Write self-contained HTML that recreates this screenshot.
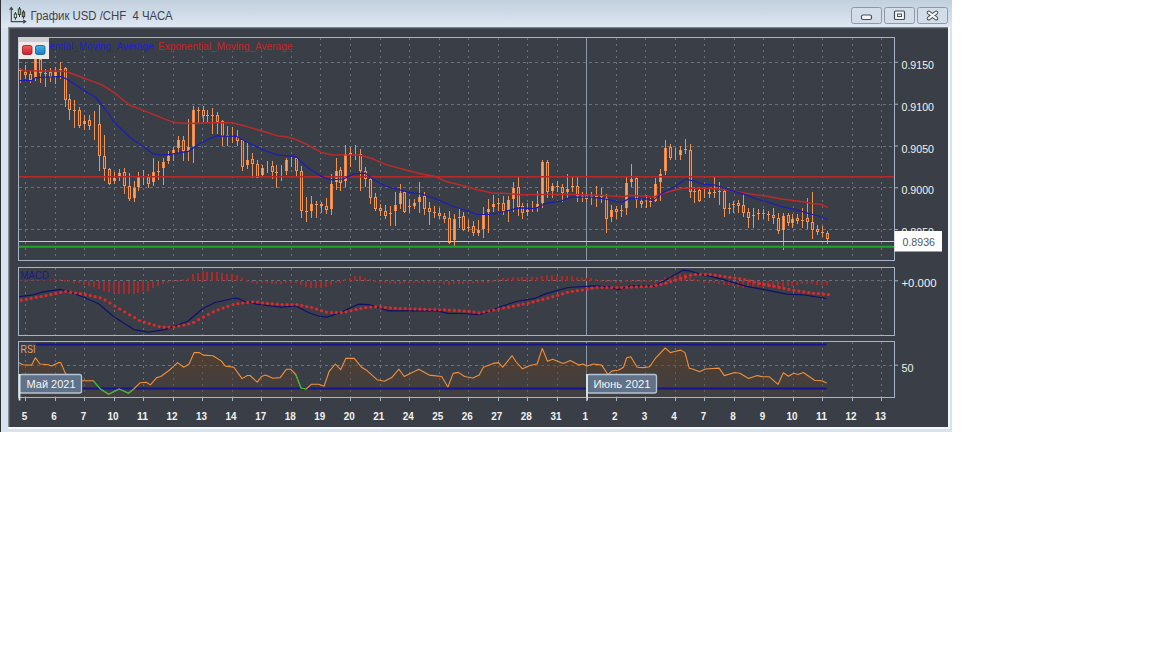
<!DOCTYPE html>
<html><head><meta charset="utf-8"><style>
html,body{margin:0;padding:0;background:#fff;width:1152px;height:648px;overflow:hidden}
svg{position:absolute;left:0;top:0;display:block}
</style></head><body>
<svg width="1152" height="648" viewBox="0 0 1152 648" shape-rendering="auto">
<rect x="0" y="0" width="952" height="432" fill="#d7e3ef"/>
<defs><linearGradient id="tg" x1="0" y1="0" x2="0" y2="1"><stop offset="0" stop-color="#c2cfdd"/><stop offset="1" stop-color="#dfe8f3"/></linearGradient></defs>
<rect x="0" y="0" width="952" height="28" fill="url(#tg)"/>
<rect x="0" y="0" width="1" height="432" fill="#303236"/>
<rect x="8" y="27" width="942" height="402" fill="#f6f9fc"/>
<rect x="8" y="27.5" width="940" height="399.5" fill="#3a3f47"/>
<rect x="8" y="27" width="940" height="1" fill="#7c8186"/><rect x="8" y="28" width="940" height="1" fill="#4e535a"/>
<rect x="8" y="27" width="1" height="400" fill="#868a8e"/><rect x="9" y="28" width="1" height="399" fill="#555a60"/>
<g stroke="#3e4a56" stroke-width="1.2" fill="none"><path d="M11.3 8 V21.6 H25.3"/><path d="M9.6 9.8 L11.3 7.6 L13 9.8"/><path d="M23.3 19.9 L25.6 21.6 L23.3 23.3"/></g>
<g stroke="#24382a" stroke-width="1"><path d="M15.4 12 V19.8 M19.5 7 V17 M23.5 10.2 V18.7"/></g>
<rect x="14.2" y="14" width="2.4" height="3.6" fill="#d6e6d4" stroke="#2a4530" stroke-width="0.9"/>
<rect x="18.3" y="9" width="2.4" height="5.5" fill="#86bc84" stroke="#2a4530" stroke-width="0.9"/>
<rect x="22.3" y="12" width="2.4" height="4.7" fill="#a87c7c" stroke="#3a3030" stroke-width="0.9"/>
<text x="30.5" y="20" font-family="Liberation Sans" font-size="12.5" fill="#3e434a" textLength="142" lengthAdjust="spacingAndGlyphs" xml:space="preserve">График USD /CHF  4 ЧАСА</text>
<rect x="851.5" y="7.5" width="30" height="16" rx="2" fill="#d3dde9" stroke="#8e9aa8" stroke-width="1"/>
<rect x="884.5" y="7.5" width="30" height="16" rx="2" fill="#d3dde9" stroke="#8e9aa8" stroke-width="1"/>
<rect x="917.5" y="7.5" width="30" height="16" rx="2" fill="#d3dde9" stroke="#8e9aa8" stroke-width="1"/>
<rect x="861.5" y="15" width="10" height="4.5" rx="1.5" fill="#f4f6f8" stroke="#4a4f56" stroke-width="1.2"/>
<rect x="894.5" y="11" width="10" height="8.5" rx="1" fill="#f4f6f8" stroke="#4a4f56" stroke-width="1.2"/><rect x="897.5" y="14" width="4" height="2.5" fill="none" stroke="#4a4f56" stroke-width="1"/>
<path d="M928.8 12.6 L936.2 18.4 M936.2 12.6 L928.8 18.4" stroke="#4a4f56" stroke-width="4.2" stroke-linecap="round"/><path d="M928.8 12.6 L936.2 18.4 M936.2 12.6 L928.8 18.4" stroke="#f4f6f8" stroke-width="2.2" stroke-linecap="round"/>
<line x1="25.5" y1="37.5" x2="25.5" y2="260.5" stroke="#68717c" stroke-width="1" stroke-dasharray="2 4" shape-rendering="crispEdges"/>
<line x1="55.5" y1="37.5" x2="55.5" y2="260.5" stroke="#68717c" stroke-width="1" stroke-dasharray="2 4" shape-rendering="crispEdges"/>
<line x1="84.5" y1="37.5" x2="84.5" y2="260.5" stroke="#68717c" stroke-width="1" stroke-dasharray="2 4" shape-rendering="crispEdges"/>
<line x1="114.5" y1="37.5" x2="114.5" y2="260.5" stroke="#68717c" stroke-width="1" stroke-dasharray="2 4" shape-rendering="crispEdges"/>
<line x1="143.5" y1="37.5" x2="143.5" y2="260.5" stroke="#68717c" stroke-width="1" stroke-dasharray="2 4" shape-rendering="crispEdges"/>
<line x1="173.5" y1="37.5" x2="173.5" y2="260.5" stroke="#68717c" stroke-width="1" stroke-dasharray="2 4" shape-rendering="crispEdges"/>
<line x1="202.5" y1="37.5" x2="202.5" y2="260.5" stroke="#68717c" stroke-width="1" stroke-dasharray="2 4" shape-rendering="crispEdges"/>
<line x1="232.5" y1="37.5" x2="232.5" y2="260.5" stroke="#68717c" stroke-width="1" stroke-dasharray="2 4" shape-rendering="crispEdges"/>
<line x1="261.5" y1="37.5" x2="261.5" y2="260.5" stroke="#68717c" stroke-width="1" stroke-dasharray="2 4" shape-rendering="crispEdges"/>
<line x1="291.5" y1="37.5" x2="291.5" y2="260.5" stroke="#68717c" stroke-width="1" stroke-dasharray="2 4" shape-rendering="crispEdges"/>
<line x1="320.5" y1="37.5" x2="320.5" y2="260.5" stroke="#68717c" stroke-width="1" stroke-dasharray="2 4" shape-rendering="crispEdges"/>
<line x1="350.5" y1="37.5" x2="350.5" y2="260.5" stroke="#68717c" stroke-width="1" stroke-dasharray="2 4" shape-rendering="crispEdges"/>
<line x1="380.5" y1="37.5" x2="380.5" y2="260.5" stroke="#68717c" stroke-width="1" stroke-dasharray="2 4" shape-rendering="crispEdges"/>
<line x1="409.5" y1="37.5" x2="409.5" y2="260.5" stroke="#68717c" stroke-width="1" stroke-dasharray="2 4" shape-rendering="crispEdges"/>
<line x1="439.5" y1="37.5" x2="439.5" y2="260.5" stroke="#68717c" stroke-width="1" stroke-dasharray="2 4" shape-rendering="crispEdges"/>
<line x1="468.5" y1="37.5" x2="468.5" y2="260.5" stroke="#68717c" stroke-width="1" stroke-dasharray="2 4" shape-rendering="crispEdges"/>
<line x1="498.5" y1="37.5" x2="498.5" y2="260.5" stroke="#68717c" stroke-width="1" stroke-dasharray="2 4" shape-rendering="crispEdges"/>
<line x1="527.5" y1="37.5" x2="527.5" y2="260.5" stroke="#68717c" stroke-width="1" stroke-dasharray="2 4" shape-rendering="crispEdges"/>
<line x1="557.5" y1="37.5" x2="557.5" y2="260.5" stroke="#68717c" stroke-width="1" stroke-dasharray="2 4" shape-rendering="crispEdges"/>
<line x1="586.5" y1="37.5" x2="586.5" y2="260.5" stroke="#68717c" stroke-width="1" stroke-dasharray="2 4" shape-rendering="crispEdges"/>
<line x1="616.5" y1="37.5" x2="616.5" y2="260.5" stroke="#68717c" stroke-width="1" stroke-dasharray="2 4" shape-rendering="crispEdges"/>
<line x1="645.5" y1="37.5" x2="645.5" y2="260.5" stroke="#68717c" stroke-width="1" stroke-dasharray="2 4" shape-rendering="crispEdges"/>
<line x1="675.5" y1="37.5" x2="675.5" y2="260.5" stroke="#68717c" stroke-width="1" stroke-dasharray="2 4" shape-rendering="crispEdges"/>
<line x1="704.5" y1="37.5" x2="704.5" y2="260.5" stroke="#68717c" stroke-width="1" stroke-dasharray="2 4" shape-rendering="crispEdges"/>
<line x1="734.5" y1="37.5" x2="734.5" y2="260.5" stroke="#68717c" stroke-width="1" stroke-dasharray="2 4" shape-rendering="crispEdges"/>
<line x1="763.5" y1="37.5" x2="763.5" y2="260.5" stroke="#68717c" stroke-width="1" stroke-dasharray="2 4" shape-rendering="crispEdges"/>
<line x1="793.5" y1="37.5" x2="793.5" y2="260.5" stroke="#68717c" stroke-width="1" stroke-dasharray="2 4" shape-rendering="crispEdges"/>
<line x1="822.5" y1="37.5" x2="822.5" y2="260.5" stroke="#68717c" stroke-width="1" stroke-dasharray="2 4" shape-rendering="crispEdges"/>
<line x1="852.5" y1="37.5" x2="852.5" y2="260.5" stroke="#68717c" stroke-width="1" stroke-dasharray="2 4" shape-rendering="crispEdges"/>
<line x1="881.5" y1="37.5" x2="881.5" y2="260.5" stroke="#68717c" stroke-width="1" stroke-dasharray="2 4" shape-rendering="crispEdges"/>
<line x1="18.5" y1="62.5" x2="894.5" y2="62.5" stroke="#68717c" stroke-width="1" stroke-dasharray="3 3" shape-rendering="crispEdges"/>
<line x1="894.5" y1="62.3" x2="898.0" y2="62.3" stroke="#a6b4c6" stroke-width="1"/>
<line x1="18.5" y1="104.5" x2="894.5" y2="104.5" stroke="#68717c" stroke-width="1" stroke-dasharray="3 3" shape-rendering="crispEdges"/>
<line x1="894.5" y1="104.2" x2="898.0" y2="104.2" stroke="#a6b4c6" stroke-width="1"/>
<line x1="18.5" y1="146.5" x2="894.5" y2="146.5" stroke="#68717c" stroke-width="1" stroke-dasharray="3 3" shape-rendering="crispEdges"/>
<line x1="894.5" y1="146.0" x2="898.0" y2="146.0" stroke="#a6b4c6" stroke-width="1"/>
<line x1="18.5" y1="187.5" x2="894.5" y2="187.5" stroke="#68717c" stroke-width="1" stroke-dasharray="3 3" shape-rendering="crispEdges"/>
<line x1="894.5" y1="187.8" x2="898.0" y2="187.8" stroke="#a6b4c6" stroke-width="1"/>
<line x1="18.5" y1="229.5" x2="894.5" y2="229.5" stroke="#68717c" stroke-width="1" stroke-dasharray="3 3" shape-rendering="crispEdges"/>
<line x1="894.5" y1="229.6" x2="898.0" y2="229.6" stroke="#a6b4c6" stroke-width="1"/>
<rect x="18.5" y="37.5" width="876.0" height="223.0" fill="none" stroke="#a6b4c6" stroke-width="1"/>
<line x1="25.5" y1="267.5" x2="25.5" y2="335.5" stroke="#68717c" stroke-width="1" stroke-dasharray="2 4" shape-rendering="crispEdges"/>
<line x1="55.5" y1="267.5" x2="55.5" y2="335.5" stroke="#68717c" stroke-width="1" stroke-dasharray="2 4" shape-rendering="crispEdges"/>
<line x1="84.5" y1="267.5" x2="84.5" y2="335.5" stroke="#68717c" stroke-width="1" stroke-dasharray="2 4" shape-rendering="crispEdges"/>
<line x1="114.5" y1="267.5" x2="114.5" y2="335.5" stroke="#68717c" stroke-width="1" stroke-dasharray="2 4" shape-rendering="crispEdges"/>
<line x1="143.5" y1="267.5" x2="143.5" y2="335.5" stroke="#68717c" stroke-width="1" stroke-dasharray="2 4" shape-rendering="crispEdges"/>
<line x1="173.5" y1="267.5" x2="173.5" y2="335.5" stroke="#68717c" stroke-width="1" stroke-dasharray="2 4" shape-rendering="crispEdges"/>
<line x1="202.5" y1="267.5" x2="202.5" y2="335.5" stroke="#68717c" stroke-width="1" stroke-dasharray="2 4" shape-rendering="crispEdges"/>
<line x1="232.5" y1="267.5" x2="232.5" y2="335.5" stroke="#68717c" stroke-width="1" stroke-dasharray="2 4" shape-rendering="crispEdges"/>
<line x1="261.5" y1="267.5" x2="261.5" y2="335.5" stroke="#68717c" stroke-width="1" stroke-dasharray="2 4" shape-rendering="crispEdges"/>
<line x1="291.5" y1="267.5" x2="291.5" y2="335.5" stroke="#68717c" stroke-width="1" stroke-dasharray="2 4" shape-rendering="crispEdges"/>
<line x1="320.5" y1="267.5" x2="320.5" y2="335.5" stroke="#68717c" stroke-width="1" stroke-dasharray="2 4" shape-rendering="crispEdges"/>
<line x1="350.5" y1="267.5" x2="350.5" y2="335.5" stroke="#68717c" stroke-width="1" stroke-dasharray="2 4" shape-rendering="crispEdges"/>
<line x1="380.5" y1="267.5" x2="380.5" y2="335.5" stroke="#68717c" stroke-width="1" stroke-dasharray="2 4" shape-rendering="crispEdges"/>
<line x1="409.5" y1="267.5" x2="409.5" y2="335.5" stroke="#68717c" stroke-width="1" stroke-dasharray="2 4" shape-rendering="crispEdges"/>
<line x1="439.5" y1="267.5" x2="439.5" y2="335.5" stroke="#68717c" stroke-width="1" stroke-dasharray="2 4" shape-rendering="crispEdges"/>
<line x1="468.5" y1="267.5" x2="468.5" y2="335.5" stroke="#68717c" stroke-width="1" stroke-dasharray="2 4" shape-rendering="crispEdges"/>
<line x1="498.5" y1="267.5" x2="498.5" y2="335.5" stroke="#68717c" stroke-width="1" stroke-dasharray="2 4" shape-rendering="crispEdges"/>
<line x1="527.5" y1="267.5" x2="527.5" y2="335.5" stroke="#68717c" stroke-width="1" stroke-dasharray="2 4" shape-rendering="crispEdges"/>
<line x1="557.5" y1="267.5" x2="557.5" y2="335.5" stroke="#68717c" stroke-width="1" stroke-dasharray="2 4" shape-rendering="crispEdges"/>
<line x1="586.5" y1="267.5" x2="586.5" y2="335.5" stroke="#68717c" stroke-width="1" stroke-dasharray="2 4" shape-rendering="crispEdges"/>
<line x1="616.5" y1="267.5" x2="616.5" y2="335.5" stroke="#68717c" stroke-width="1" stroke-dasharray="2 4" shape-rendering="crispEdges"/>
<line x1="645.5" y1="267.5" x2="645.5" y2="335.5" stroke="#68717c" stroke-width="1" stroke-dasharray="2 4" shape-rendering="crispEdges"/>
<line x1="675.5" y1="267.5" x2="675.5" y2="335.5" stroke="#68717c" stroke-width="1" stroke-dasharray="2 4" shape-rendering="crispEdges"/>
<line x1="704.5" y1="267.5" x2="704.5" y2="335.5" stroke="#68717c" stroke-width="1" stroke-dasharray="2 4" shape-rendering="crispEdges"/>
<line x1="734.5" y1="267.5" x2="734.5" y2="335.5" stroke="#68717c" stroke-width="1" stroke-dasharray="2 4" shape-rendering="crispEdges"/>
<line x1="763.5" y1="267.5" x2="763.5" y2="335.5" stroke="#68717c" stroke-width="1" stroke-dasharray="2 4" shape-rendering="crispEdges"/>
<line x1="793.5" y1="267.5" x2="793.5" y2="335.5" stroke="#68717c" stroke-width="1" stroke-dasharray="2 4" shape-rendering="crispEdges"/>
<line x1="822.5" y1="267.5" x2="822.5" y2="335.5" stroke="#68717c" stroke-width="1" stroke-dasharray="2 4" shape-rendering="crispEdges"/>
<line x1="852.5" y1="267.5" x2="852.5" y2="335.5" stroke="#68717c" stroke-width="1" stroke-dasharray="2 4" shape-rendering="crispEdges"/>
<line x1="881.5" y1="267.5" x2="881.5" y2="335.5" stroke="#68717c" stroke-width="1" stroke-dasharray="2 4" shape-rendering="crispEdges"/>
<line x1="18.5" y1="280.5" x2="894.5" y2="280.5" stroke="#68717c" stroke-width="1" stroke-dasharray="3 3" shape-rendering="crispEdges"/>
<line x1="894.5" y1="280.8" x2="898.0" y2="280.8" stroke="#a6b4c6" stroke-width="1"/>
<rect x="18.5" y="267.5" width="876.0" height="68.0" fill="none" stroke="#a6b4c6" stroke-width="1"/>
<line x1="25.5" y1="341.5" x2="25.5" y2="397.5" stroke="#68717c" stroke-width="1" stroke-dasharray="2 4" shape-rendering="crispEdges"/>
<line x1="55.5" y1="341.5" x2="55.5" y2="397.5" stroke="#68717c" stroke-width="1" stroke-dasharray="2 4" shape-rendering="crispEdges"/>
<line x1="84.5" y1="341.5" x2="84.5" y2="397.5" stroke="#68717c" stroke-width="1" stroke-dasharray="2 4" shape-rendering="crispEdges"/>
<line x1="114.5" y1="341.5" x2="114.5" y2="397.5" stroke="#68717c" stroke-width="1" stroke-dasharray="2 4" shape-rendering="crispEdges"/>
<line x1="143.5" y1="341.5" x2="143.5" y2="397.5" stroke="#68717c" stroke-width="1" stroke-dasharray="2 4" shape-rendering="crispEdges"/>
<line x1="173.5" y1="341.5" x2="173.5" y2="397.5" stroke="#68717c" stroke-width="1" stroke-dasharray="2 4" shape-rendering="crispEdges"/>
<line x1="202.5" y1="341.5" x2="202.5" y2="397.5" stroke="#68717c" stroke-width="1" stroke-dasharray="2 4" shape-rendering="crispEdges"/>
<line x1="232.5" y1="341.5" x2="232.5" y2="397.5" stroke="#68717c" stroke-width="1" stroke-dasharray="2 4" shape-rendering="crispEdges"/>
<line x1="261.5" y1="341.5" x2="261.5" y2="397.5" stroke="#68717c" stroke-width="1" stroke-dasharray="2 4" shape-rendering="crispEdges"/>
<line x1="291.5" y1="341.5" x2="291.5" y2="397.5" stroke="#68717c" stroke-width="1" stroke-dasharray="2 4" shape-rendering="crispEdges"/>
<line x1="320.5" y1="341.5" x2="320.5" y2="397.5" stroke="#68717c" stroke-width="1" stroke-dasharray="2 4" shape-rendering="crispEdges"/>
<line x1="350.5" y1="341.5" x2="350.5" y2="397.5" stroke="#68717c" stroke-width="1" stroke-dasharray="2 4" shape-rendering="crispEdges"/>
<line x1="380.5" y1="341.5" x2="380.5" y2="397.5" stroke="#68717c" stroke-width="1" stroke-dasharray="2 4" shape-rendering="crispEdges"/>
<line x1="409.5" y1="341.5" x2="409.5" y2="397.5" stroke="#68717c" stroke-width="1" stroke-dasharray="2 4" shape-rendering="crispEdges"/>
<line x1="439.5" y1="341.5" x2="439.5" y2="397.5" stroke="#68717c" stroke-width="1" stroke-dasharray="2 4" shape-rendering="crispEdges"/>
<line x1="468.5" y1="341.5" x2="468.5" y2="397.5" stroke="#68717c" stroke-width="1" stroke-dasharray="2 4" shape-rendering="crispEdges"/>
<line x1="498.5" y1="341.5" x2="498.5" y2="397.5" stroke="#68717c" stroke-width="1" stroke-dasharray="2 4" shape-rendering="crispEdges"/>
<line x1="527.5" y1="341.5" x2="527.5" y2="397.5" stroke="#68717c" stroke-width="1" stroke-dasharray="2 4" shape-rendering="crispEdges"/>
<line x1="557.5" y1="341.5" x2="557.5" y2="397.5" stroke="#68717c" stroke-width="1" stroke-dasharray="2 4" shape-rendering="crispEdges"/>
<line x1="586.5" y1="341.5" x2="586.5" y2="397.5" stroke="#68717c" stroke-width="1" stroke-dasharray="2 4" shape-rendering="crispEdges"/>
<line x1="616.5" y1="341.5" x2="616.5" y2="397.5" stroke="#68717c" stroke-width="1" stroke-dasharray="2 4" shape-rendering="crispEdges"/>
<line x1="645.5" y1="341.5" x2="645.5" y2="397.5" stroke="#68717c" stroke-width="1" stroke-dasharray="2 4" shape-rendering="crispEdges"/>
<line x1="675.5" y1="341.5" x2="675.5" y2="397.5" stroke="#68717c" stroke-width="1" stroke-dasharray="2 4" shape-rendering="crispEdges"/>
<line x1="704.5" y1="341.5" x2="704.5" y2="397.5" stroke="#68717c" stroke-width="1" stroke-dasharray="2 4" shape-rendering="crispEdges"/>
<line x1="734.5" y1="341.5" x2="734.5" y2="397.5" stroke="#68717c" stroke-width="1" stroke-dasharray="2 4" shape-rendering="crispEdges"/>
<line x1="763.5" y1="341.5" x2="763.5" y2="397.5" stroke="#68717c" stroke-width="1" stroke-dasharray="2 4" shape-rendering="crispEdges"/>
<line x1="793.5" y1="341.5" x2="793.5" y2="397.5" stroke="#68717c" stroke-width="1" stroke-dasharray="2 4" shape-rendering="crispEdges"/>
<line x1="822.5" y1="341.5" x2="822.5" y2="397.5" stroke="#68717c" stroke-width="1" stroke-dasharray="2 4" shape-rendering="crispEdges"/>
<line x1="852.5" y1="341.5" x2="852.5" y2="397.5" stroke="#68717c" stroke-width="1" stroke-dasharray="2 4" shape-rendering="crispEdges"/>
<line x1="881.5" y1="341.5" x2="881.5" y2="397.5" stroke="#68717c" stroke-width="1" stroke-dasharray="2 4" shape-rendering="crispEdges"/>
<line x1="18.5" y1="365.5" x2="894.5" y2="365.5" stroke="#68717c" stroke-width="1" stroke-dasharray="3 3" shape-rendering="crispEdges"/>
<line x1="894.5" y1="365.2" x2="898.0" y2="365.2" stroke="#a6b4c6" stroke-width="1"/>
<rect x="18.5" y="341.5" width="876.0" height="56.0" fill="none" stroke="#a6b4c6" stroke-width="1"/>
<defs><clipPath id="cp1"><rect x="19" y="38" width="875" height="222"/></clipPath><clipPath id="cp2"><rect x="19" y="268" width="875" height="67"/></clipPath><clipPath id="cp3"><rect x="19" y="342" width="875" height="55"/></clipPath>
<linearGradient id="rg" gradientUnits="userSpaceOnUse" x1="0" y1="348" x2="0" y2="397"><stop offset="0" stop-color="#6e3c10" stop-opacity="0.5"/><stop offset="1" stop-color="#4e3f36" stop-opacity="0.3"/></linearGradient></defs>
<line x1="586.5" y1="38" x2="586.5" y2="260" stroke="#8d99a6" stroke-width="1"/>
<line x1="586.5" y1="268" x2="586.5" y2="335" stroke="#8d99a6" stroke-width="1"/>
<line x1="586.5" y1="342" x2="586.5" y2="397" stroke="#8d99a6" stroke-width="1"/>
<g clip-path="url(#cp1)">
<path d="M20.5 68V83M25.5 65V79M30.5 71V83M35.5 50V81M40.5 52V83M45.5 69V87M50.5 68V82M55.5 67V84M60.5 62V79M65.5 67V107M69.5 94V120M74.5 100V128M79.5 107V128M84.5 115V130M89.5 115V130M94.5 111V140M99.5 105V171M104.5 135V181M109.5 168V185M114.5 172V184M119.5 169V181M124.5 168V194M129.5 173V201M134.5 181V202M138.5 172V191M143.5 170V185M148.5 174V188M153.5 158V186M158.5 161V180M163.5 158V185M168.5 151V164M173.5 147V161M178.5 136V153M183.5 136V161M188.5 119V161M193.5 106V163M198.5 107V123M203.5 106V122M207.5 110V122M212.5 108V134M217.5 112V134M222.5 120V146M227.5 126V146M232.5 127V143M237.5 130V146M242.5 140V171M247.5 142V169M252.5 153V178M257.5 160V178M262.5 165V176M267.5 161V173M272.5 161V179M276.5 165V188M281.5 165V181M286.5 158V175M291.5 157V167M296.5 157V176M301.5 166V218M306.5 197V222M311.5 196V218M316.5 201V218M321.5 202V213M326.5 198V214M331.5 174V215M336.5 158V190M340.5 167V191M345.5 145V187M350.5 147V167M355.5 145V160M360.5 149V191M365.5 167V187M370.5 178V204M375.5 193V211M380.5 204V216M385.5 205V219M390.5 206V226M395.5 192V226M400.5 184V209M404.5 191V213M409.5 199V213M414.5 199V209M419.5 182V213M424.5 192V215M429.5 202V225M434.5 206V218M439.5 208V219M444.5 213V223M449.5 211V244M454.5 214V246M459.5 208V228M463.5 212V231M468.5 220V232M473.5 221V236M478.5 220V236M483.5 207V238M488.5 199V233M493.5 195V212M498.5 198V211M503.5 196V215M508.5 196V222M513.5 182V212M518.5 177V216M522.5 203V219M527.5 203V216M532.5 201V212M537.5 191V212M542.5 160V208M547.5 160V198M552.5 183V198M557.5 181V192M562.5 184V202M567.5 174V198M572.5 177V192M577.5 177V202M582.5 192V202M586.5 193V202M591.5 192V205M596.5 186V207M601.5 188V203M606.5 194V233M611.5 205V222M616.5 206V219M621.5 205V217M626.5 177V215M631.5 164V187M636.5 177V208M641.5 198V208M646.5 195V208M650.5 198V207M655.5 178V202M660.5 169V201M665.5 140V175M670.5 144V160M675.5 148V160M680.5 146V160M685.5 139V154M690.5 144V198M694.5 187V203M699.5 188V202M704.5 188V198M709.5 188V198M714.5 177V198M719.5 182V205M724.5 188V217M729.5 203V214M733.5 201V213M738.5 200V213M743.5 194V217M748.5 208V228M753.5 208V228M758.5 209V220M763.5 209V219M768.5 211V221M773.5 208V224M778.5 213V234M783.5 213V250M788.5 213V226M792.5 214V228M797.5 214V224M802.5 208V228M807.5 198V229M812.5 192V239M817.5 225V235M822.5 226V237M827.5 231V244" stroke="#f09352" stroke-width="1" fill="none" shape-rendering="crispEdges"/>
<g shape-rendering="crispEdges"><rect x="19" y="70" width="3" height="1" fill="#f39457"/><rect x="24" y="72" width="3" height="3" fill="#f39457"/><rect x="25" y="73" width="1" height="1" fill="#7a3a1e"/><rect x="29" y="74" width="3" height="6" fill="#f39457"/><rect x="30" y="75" width="1" height="4" fill="#7a3a1e"/><rect x="34" y="59" width="3" height="19" fill="#f0884a"/><rect x="35" y="59" width="1" height="19" fill="#f8a464"/><rect x="39" y="59" width="3" height="14" fill="#f39457"/><rect x="40" y="60" width="1" height="12" fill="#7a3a1e"/><rect x="44" y="73" width="3" height="1" fill="#f39457"/><rect x="49" y="72" width="3" height="5" fill="#f39457"/><rect x="50" y="73" width="1" height="3" fill="#7a3a1e"/><rect x="54" y="72" width="3" height="4" fill="#f0884a"/><rect x="55" y="72" width="1" height="4" fill="#f8a464"/><rect x="59" y="69" width="3" height="1" fill="#f39457"/><rect x="64" y="68" width="3" height="32" fill="#f39457"/><rect x="65" y="69" width="1" height="30" fill="#7a3a1e"/><rect x="68" y="99" width="3" height="11" fill="#f39457"/><rect x="69" y="100" width="1" height="9" fill="#7a3a1e"/><rect x="73" y="110" width="3" height="1" fill="#f39457"/><rect x="78" y="110" width="3" height="16" fill="#f39457"/><rect x="79" y="111" width="1" height="14" fill="#7a3a1e"/><rect x="83" y="121" width="3" height="3" fill="#f0884a"/><rect x="84" y="121" width="1" height="3" fill="#f8a464"/><rect x="88" y="120" width="3" height="6" fill="#f39457"/><rect x="89" y="121" width="1" height="4" fill="#7a3a1e"/><rect x="98" y="124" width="3" height="32" fill="#f39457"/><rect x="99" y="125" width="1" height="30" fill="#7a3a1e"/><rect x="103" y="156" width="3" height="13" fill="#f39457"/><rect x="104" y="157" width="1" height="11" fill="#7a3a1e"/><rect x="108" y="169" width="3" height="15" fill="#f39457"/><rect x="109" y="170" width="1" height="13" fill="#7a3a1e"/><rect x="113" y="178" width="3" height="3" fill="#f0884a"/><rect x="114" y="178" width="1" height="3" fill="#f8a464"/><rect x="118" y="173" width="3" height="3" fill="#f0884a"/><rect x="119" y="173" width="1" height="3" fill="#f8a464"/><rect x="123" y="172" width="3" height="14" fill="#f39457"/><rect x="124" y="173" width="1" height="12" fill="#7a3a1e"/><rect x="128" y="186" width="3" height="13" fill="#f39457"/><rect x="129" y="187" width="1" height="11" fill="#7a3a1e"/><rect x="133" y="188" width="3" height="10" fill="#f0884a"/><rect x="134" y="188" width="1" height="10" fill="#f8a464"/><rect x="137" y="177" width="3" height="10" fill="#f0884a"/><rect x="138" y="177" width="1" height="10" fill="#f8a464"/><rect x="147" y="177" width="3" height="7" fill="#f39457"/><rect x="148" y="178" width="1" height="5" fill="#7a3a1e"/><rect x="152" y="172" width="3" height="10" fill="#f0884a"/><rect x="153" y="172" width="1" height="10" fill="#f8a464"/><rect x="157" y="171" width="3" height="1" fill="#f39457"/><rect x="162" y="162" width="3" height="6" fill="#f0884a"/><rect x="163" y="162" width="1" height="6" fill="#f8a464"/><rect x="167" y="156" width="3" height="5" fill="#f0884a"/><rect x="168" y="156" width="1" height="5" fill="#f8a464"/><rect x="172" y="150" width="3" height="4" fill="#f0884a"/><rect x="173" y="150" width="1" height="4" fill="#f8a464"/><rect x="177" y="140" width="3" height="8" fill="#f0884a"/><rect x="178" y="140" width="1" height="8" fill="#f8a464"/><rect x="182" y="140" width="3" height="11" fill="#f39457"/><rect x="183" y="141" width="1" height="9" fill="#7a3a1e"/><rect x="187" y="147" width="3" height="4" fill="#f0884a"/><rect x="188" y="147" width="1" height="4" fill="#f8a464"/><rect x="192" y="110" width="3" height="36" fill="#f0884a"/><rect x="193" y="110" width="1" height="36" fill="#f8a464"/><rect x="197" y="110" width="3" height="1" fill="#f39457"/><rect x="202" y="110" width="3" height="6" fill="#f39457"/><rect x="203" y="111" width="1" height="4" fill="#7a3a1e"/><rect x="206" y="115" width="3" height="1" fill="#f39457"/><rect x="211" y="115" width="3" height="1" fill="#f39457"/><rect x="216" y="115" width="3" height="7" fill="#f39457"/><rect x="217" y="116" width="1" height="5" fill="#7a3a1e"/><rect x="221" y="121" width="3" height="15" fill="#f39457"/><rect x="222" y="122" width="1" height="13" fill="#7a3a1e"/><rect x="226" y="135" width="3" height="1" fill="#f39457"/><rect x="236" y="137" width="3" height="4" fill="#f39457"/><rect x="237" y="138" width="1" height="2" fill="#7a3a1e"/><rect x="241" y="140" width="3" height="27" fill="#f39457"/><rect x="242" y="141" width="1" height="25" fill="#7a3a1e"/><rect x="246" y="160" width="3" height="5" fill="#f0884a"/><rect x="247" y="160" width="1" height="5" fill="#f8a464"/><rect x="251" y="159" width="3" height="5" fill="#f39457"/><rect x="252" y="160" width="1" height="3" fill="#7a3a1e"/><rect x="256" y="164" width="3" height="14" fill="#f39457"/><rect x="257" y="165" width="1" height="12" fill="#7a3a1e"/><rect x="261" y="168" width="3" height="7" fill="#f0884a"/><rect x="262" y="168" width="1" height="7" fill="#f8a464"/><rect x="271" y="166" width="3" height="6" fill="#f39457"/><rect x="272" y="167" width="1" height="4" fill="#7a3a1e"/><rect x="275" y="172" width="3" height="1" fill="#f39457"/><rect x="285" y="160" width="3" height="11" fill="#f0884a"/><rect x="286" y="160" width="1" height="11" fill="#f8a464"/><rect x="295" y="158" width="3" height="13" fill="#f39457"/><rect x="296" y="159" width="1" height="11" fill="#7a3a1e"/><rect x="300" y="171" width="3" height="40" fill="#f39457"/><rect x="301" y="172" width="1" height="38" fill="#7a3a1e"/><rect x="305" y="211" width="3" height="1" fill="#f39457"/><rect x="310" y="204" width="3" height="7" fill="#f0884a"/><rect x="311" y="204" width="1" height="7" fill="#f8a464"/><rect x="315" y="204" width="3" height="1" fill="#f39457"/><rect x="320" y="204" width="3" height="2" fill="#f39457"/><rect x="321" y="205" width="1" height="0" fill="#7a3a1e"/><rect x="325" y="206" width="3" height="4" fill="#f39457"/><rect x="326" y="207" width="1" height="2" fill="#7a3a1e"/><rect x="330" y="184" width="3" height="25" fill="#f0884a"/><rect x="331" y="184" width="1" height="25" fill="#f8a464"/><rect x="335" y="171" width="3" height="11" fill="#f0884a"/><rect x="336" y="171" width="1" height="11" fill="#f8a464"/><rect x="339" y="170" width="3" height="13" fill="#f39457"/><rect x="340" y="171" width="1" height="11" fill="#7a3a1e"/><rect x="344" y="154" width="3" height="27" fill="#f0884a"/><rect x="345" y="154" width="1" height="27" fill="#f8a464"/><rect x="349" y="153" width="3" height="2" fill="#f39457"/><rect x="350" y="154" width="1" height="0" fill="#7a3a1e"/><rect x="359" y="154" width="3" height="17" fill="#f39457"/><rect x="360" y="155" width="1" height="15" fill="#7a3a1e"/><rect x="364" y="171" width="3" height="8" fill="#f39457"/><rect x="365" y="172" width="1" height="6" fill="#7a3a1e"/><rect x="369" y="179" width="3" height="19" fill="#f39457"/><rect x="370" y="180" width="1" height="17" fill="#7a3a1e"/><rect x="374" y="197" width="3" height="12" fill="#f39457"/><rect x="375" y="198" width="1" height="10" fill="#7a3a1e"/><rect x="379" y="208" width="3" height="3" fill="#f39457"/><rect x="380" y="209" width="1" height="1" fill="#7a3a1e"/><rect x="384" y="211" width="3" height="5" fill="#f39457"/><rect x="385" y="212" width="1" height="3" fill="#7a3a1e"/><rect x="389" y="213" width="3" height="1" fill="#f39457"/><rect x="394" y="205" width="3" height="6" fill="#f0884a"/><rect x="395" y="205" width="1" height="6" fill="#f8a464"/><rect x="399" y="193" width="3" height="11" fill="#f0884a"/><rect x="400" y="193" width="1" height="11" fill="#f8a464"/><rect x="403" y="192" width="3" height="20" fill="#f39457"/><rect x="404" y="193" width="1" height="18" fill="#7a3a1e"/><rect x="408" y="206" width="3" height="1" fill="#f39457"/><rect x="413" y="203" width="3" height="3" fill="#f0884a"/><rect x="414" y="203" width="1" height="3" fill="#f8a464"/><rect x="418" y="197" width="3" height="5" fill="#f0884a"/><rect x="419" y="197" width="1" height="5" fill="#f8a464"/><rect x="423" y="196" width="3" height="13" fill="#f39457"/><rect x="424" y="197" width="1" height="11" fill="#7a3a1e"/><rect x="428" y="208" width="3" height="4" fill="#f39457"/><rect x="429" y="209" width="1" height="2" fill="#7a3a1e"/><rect x="433" y="212" width="3" height="1" fill="#f39457"/><rect x="438" y="213" width="3" height="3" fill="#f39457"/><rect x="439" y="214" width="1" height="1" fill="#7a3a1e"/><rect x="443" y="216" width="3" height="3" fill="#f39457"/><rect x="444" y="217" width="1" height="1" fill="#7a3a1e"/><rect x="448" y="218" width="3" height="25" fill="#f39457"/><rect x="449" y="219" width="1" height="23" fill="#7a3a1e"/><rect x="453" y="219" width="3" height="21" fill="#f0884a"/><rect x="454" y="219" width="1" height="21" fill="#f8a464"/><rect x="458" y="217" width="3" height="1" fill="#f39457"/><rect x="462" y="216" width="3" height="14" fill="#f39457"/><rect x="463" y="217" width="1" height="12" fill="#7a3a1e"/><rect x="467" y="227" width="3" height="1" fill="#f39457"/><rect x="472" y="226" width="3" height="7" fill="#f39457"/><rect x="473" y="227" width="1" height="5" fill="#7a3a1e"/><rect x="477" y="230" width="3" height="3" fill="#f0884a"/><rect x="478" y="230" width="1" height="3" fill="#f8a464"/><rect x="482" y="215" width="3" height="14" fill="#f0884a"/><rect x="483" y="215" width="1" height="14" fill="#f8a464"/><rect x="487" y="209" width="3" height="3" fill="#f0884a"/><rect x="488" y="209" width="1" height="3" fill="#f8a464"/><rect x="492" y="204" width="3" height="3" fill="#f0884a"/><rect x="493" y="204" width="1" height="3" fill="#f8a464"/><rect x="497" y="203" width="3" height="1" fill="#f39457"/><rect x="502" y="203" width="3" height="8" fill="#f39457"/><rect x="503" y="204" width="1" height="6" fill="#7a3a1e"/><rect x="507" y="200" width="3" height="10" fill="#f0884a"/><rect x="508" y="200" width="1" height="10" fill="#f8a464"/><rect x="512" y="188" width="3" height="11" fill="#f0884a"/><rect x="513" y="188" width="1" height="11" fill="#f8a464"/><rect x="517" y="187" width="3" height="20" fill="#f39457"/><rect x="518" y="188" width="1" height="18" fill="#7a3a1e"/><rect x="521" y="206" width="3" height="7" fill="#f39457"/><rect x="522" y="207" width="1" height="5" fill="#7a3a1e"/><rect x="526" y="210" width="3" height="2" fill="#f0884a"/><rect x="527" y="210" width="1" height="2" fill="#f8a464"/><rect x="536" y="204" width="3" height="3" fill="#f0884a"/><rect x="537" y="204" width="1" height="3" fill="#f8a464"/><rect x="541" y="162" width="3" height="41" fill="#f0884a"/><rect x="542" y="162" width="1" height="41" fill="#f8a464"/><rect x="546" y="162" width="3" height="30" fill="#f39457"/><rect x="547" y="163" width="1" height="28" fill="#7a3a1e"/><rect x="551" y="186" width="3" height="5" fill="#f0884a"/><rect x="552" y="186" width="1" height="5" fill="#f8a464"/><rect x="556" y="186" width="3" height="1" fill="#f39457"/><rect x="561" y="187" width="3" height="6" fill="#f39457"/><rect x="562" y="188" width="1" height="4" fill="#7a3a1e"/><rect x="566" y="189" width="3" height="3" fill="#f0884a"/><rect x="567" y="189" width="1" height="3" fill="#f8a464"/><rect x="571" y="186" width="3" height="1" fill="#f39457"/><rect x="576" y="186" width="3" height="10" fill="#f39457"/><rect x="577" y="187" width="1" height="8" fill="#7a3a1e"/><rect x="581" y="196" width="3" height="1" fill="#f39457"/><rect x="585" y="195" width="3" height="4" fill="#f39457"/><rect x="586" y="196" width="1" height="2" fill="#7a3a1e"/><rect x="590" y="196" width="3" height="1" fill="#f39457"/><rect x="595" y="196" width="3" height="1" fill="#f39457"/><rect x="600" y="196" width="3" height="1" fill="#f39457"/><rect x="605" y="198" width="3" height="21" fill="#f39457"/><rect x="606" y="199" width="1" height="19" fill="#7a3a1e"/><rect x="610" y="210" width="3" height="7" fill="#f0884a"/><rect x="611" y="210" width="1" height="7" fill="#f8a464"/><rect x="615" y="209" width="3" height="3" fill="#f39457"/><rect x="616" y="210" width="1" height="1" fill="#7a3a1e"/><rect x="620" y="210" width="3" height="1" fill="#f39457"/><rect x="625" y="183" width="3" height="25" fill="#f0884a"/><rect x="626" y="183" width="1" height="25" fill="#f8a464"/><rect x="630" y="179" width="3" height="3" fill="#f0884a"/><rect x="631" y="179" width="1" height="3" fill="#f8a464"/><rect x="635" y="178" width="3" height="22" fill="#f39457"/><rect x="636" y="179" width="1" height="20" fill="#7a3a1e"/><rect x="640" y="201" width="3" height="3" fill="#f39457"/><rect x="641" y="202" width="1" height="1" fill="#7a3a1e"/><rect x="649" y="201" width="3" height="1" fill="#f39457"/><rect x="654" y="184" width="3" height="17" fill="#f0884a"/><rect x="655" y="184" width="1" height="17" fill="#f8a464"/><rect x="659" y="174" width="3" height="8" fill="#f0884a"/><rect x="660" y="174" width="1" height="8" fill="#f8a464"/><rect x="664" y="148" width="3" height="23" fill="#f0884a"/><rect x="665" y="148" width="1" height="23" fill="#f8a464"/><rect x="669" y="147" width="3" height="11" fill="#f39457"/><rect x="670" y="148" width="1" height="9" fill="#7a3a1e"/><rect x="679" y="150" width="3" height="5" fill="#f0884a"/><rect x="680" y="150" width="1" height="5" fill="#f8a464"/><rect x="684" y="149" width="3" height="1" fill="#f39457"/><rect x="689" y="150" width="3" height="42" fill="#f39457"/><rect x="690" y="151" width="1" height="40" fill="#7a3a1e"/><rect x="693" y="191" width="3" height="1" fill="#f39457"/><rect x="698" y="190" width="3" height="11" fill="#f39457"/><rect x="699" y="191" width="1" height="9" fill="#7a3a1e"/><rect x="708" y="192" width="3" height="2" fill="#f39457"/><rect x="709" y="193" width="1" height="0" fill="#7a3a1e"/><rect x="713" y="192" width="3" height="1" fill="#f39457"/><rect x="718" y="191" width="3" height="1" fill="#f39457"/><rect x="723" y="191" width="3" height="18" fill="#f39457"/><rect x="724" y="192" width="1" height="16" fill="#7a3a1e"/><rect x="728" y="208" width="3" height="1" fill="#f39457"/><rect x="732" y="204" width="3" height="1" fill="#f39457"/><rect x="737" y="203" width="3" height="3" fill="#f39457"/><rect x="738" y="204" width="1" height="1" fill="#7a3a1e"/><rect x="742" y="205" width="3" height="8" fill="#f39457"/><rect x="743" y="206" width="1" height="6" fill="#7a3a1e"/><rect x="747" y="212" width="3" height="6" fill="#f39457"/><rect x="748" y="213" width="1" height="4" fill="#7a3a1e"/><rect x="752" y="215" width="3" height="1" fill="#f39457"/><rect x="757" y="213" width="3" height="1" fill="#f39457"/><rect x="762" y="213" width="3" height="1" fill="#f39457"/><rect x="767" y="214" width="3" height="1" fill="#f39457"/><rect x="772" y="215" width="3" height="3" fill="#f39457"/><rect x="773" y="216" width="1" height="1" fill="#7a3a1e"/><rect x="777" y="218" width="3" height="13" fill="#f39457"/><rect x="778" y="219" width="1" height="11" fill="#7a3a1e"/><rect x="782" y="216" width="3" height="14" fill="#f0884a"/><rect x="783" y="216" width="1" height="14" fill="#f8a464"/><rect x="787" y="215" width="3" height="8" fill="#f39457"/><rect x="788" y="216" width="1" height="6" fill="#7a3a1e"/><rect x="791" y="219" width="3" height="4" fill="#f0884a"/><rect x="792" y="219" width="1" height="4" fill="#f8a464"/><rect x="796" y="218" width="3" height="3" fill="#f39457"/><rect x="797" y="219" width="1" height="1" fill="#7a3a1e"/><rect x="801" y="220" width="3" height="1" fill="#f39457"/><rect x="806" y="218" width="3" height="4" fill="#f39457"/><rect x="807" y="219" width="1" height="2" fill="#7a3a1e"/><rect x="811" y="222" width="3" height="8" fill="#f39457"/><rect x="812" y="223" width="1" height="6" fill="#7a3a1e"/><rect x="816" y="229" width="3" height="3" fill="#f39457"/><rect x="817" y="230" width="1" height="1" fill="#7a3a1e"/><rect x="821" y="232" width="3" height="1" fill="#f39457"/><rect x="826" y="233" width="3" height="6" fill="#f39457"/><rect x="827" y="234" width="1" height="4" fill="#7a3a1e"/></g>
<line x1="19" y1="176.7" x2="894" y2="176.7" stroke="#b82a2a" stroke-width="1.6"/>
<line x1="19" y1="241.5" x2="894" y2="241.5" stroke="#c9c9c9" stroke-width="1"/>
<line x1="19" y1="246.8" x2="894" y2="246.8" stroke="#1fa526" stroke-width="2"/>
<polyline points="18.5,68.6 24.3,70.7 64.2,71.3 68.4,72.3 81.0,77.0 102.0,84.9 114.5,92.8 129.4,105.0 143.3,110.4 168.0,120.4 176.2,122.8 188.5,123.5 216.3,122.5 231.7,122.8 247.2,126.6 262.6,131.3 278.0,135.9 285.0,136.6 294.3,138.9 306.6,144.3 322.0,152.8 331.3,154.8 359.0,155.1 371.4,158.2 385.3,164.4 405.0,169.8 421.6,173.9 435.5,176.5 446.3,181.6 467.9,187.0 477.2,189.8 492.6,192.9 508.0,193.5 520.0,194.8 565.9,194.3 604.5,195.6 623.0,196.8 630.0,195.2 654.7,196.8 664.0,192.9 682.5,188.3 707.2,188.3 725.7,189.8 738.0,192.1 755.1,194.8 765.9,195.9 781.3,199.0 799.8,201.3 812.2,203.6 821.4,204.4 827.6,207.5" fill="none" stroke="#bd2a2a" stroke-width="1.5" stroke-linejoin="round"/>
<polyline points="18.5,80.7 31.6,80.7 35.3,77.6 61.0,76.5 65.7,78.6 84.6,90.7 95.1,97.0 105.0,108.5 114.0,122.0 131.0,138.2 143.3,146.7 152.6,153.6 160.3,155.2 170.0,154.4 188.5,151.3 200.9,142.8 216.3,135.9 236.4,136.4 242.5,139.8 262.6,149.8 278.0,155.2 295.8,156.6 306.6,166.7 320.5,175.9 329.8,179.8 343.6,179.0 354.4,173.6 365.2,173.1 371.4,178.2 385.3,186.0 396.1,189.0 409.3,192.4 421.6,194.0 437.0,199.4 452.5,206.3 467.9,211.0 477.2,214.5 489.5,214.5 500.3,212.5 512.7,209.4 520.0,207.9 535.1,208.7 545.9,203.3 561.3,201.0 570.6,197.1 592.2,197.1 607.6,199.4 621.5,202.5 629.2,198.6 648.5,199.1 653.1,200.6 662.4,192.9 674.8,186.7 685.6,179.0 694.8,181.3 704.1,184.4 716.4,185.2 728.8,189.8 739.6,192.9 744.3,194.4 756.6,199.0 770.5,202.8 781.3,206.7 796.7,209.8 809.1,213.6 818.3,216.0 827.6,219.5" fill="none" stroke="#1c1cb8" stroke-width="1.2" stroke-linejoin="round"/>
</g>
<g clip-path="url(#cp2)">
<g fill="#a82a2a" shape-rendering="crispEdges"><rect x="19" y="279" width="2" height="2"/><rect x="24" y="279" width="2" height="2"/><rect x="29" y="279" width="2" height="2"/><rect x="34" y="279" width="2" height="2"/><rect x="39" y="279" width="2" height="2"/><rect x="44" y="279" width="2" height="2"/><rect x="49" y="279" width="2" height="2"/><rect x="54" y="279" width="2" height="2"/><rect x="59" y="279" width="2" height="2"/><rect x="64" y="280" width="2" height="2"/><rect x="68" y="280" width="2" height="2"/><rect x="73" y="281" width="2" height="2"/><rect x="78" y="281" width="2" height="2"/><rect x="83" y="281" width="2" height="4"/><rect x="88" y="281" width="2" height="5"/><rect x="93" y="281" width="2" height="6"/><rect x="98" y="281" width="2" height="8"/><rect x="103" y="281" width="2" height="10"/><rect x="108" y="281" width="2" height="11"/><rect x="113" y="281" width="2" height="12"/><rect x="118" y="281" width="2" height="13"/><rect x="123" y="281" width="2" height="13"/><rect x="128" y="281" width="2" height="13"/><rect x="133" y="281" width="2" height="13"/><rect x="137" y="281" width="2" height="12"/><rect x="142" y="281" width="2" height="10"/><rect x="147" y="281" width="2" height="10"/><rect x="152" y="281" width="2" height="7"/><rect x="157" y="281" width="2" height="5"/><rect x="162" y="281" width="2" height="3"/><rect x="167" y="281" width="2" height="2"/><rect x="172" y="280" width="2" height="2"/><rect x="177" y="280" width="2" height="2"/><rect x="182" y="279" width="2" height="2"/><rect x="187" y="278" width="2" height="3"/><rect x="192" y="274" width="2" height="7"/><rect x="197" y="273" width="2" height="8"/><rect x="202" y="271" width="2" height="10"/><rect x="206" y="272" width="2" height="9"/><rect x="211" y="272" width="2" height="9"/><rect x="216" y="272" width="2" height="9"/><rect x="221" y="273" width="2" height="8"/><rect x="226" y="274" width="2" height="7"/><rect x="231" y="274" width="2" height="7"/><rect x="236" y="275" width="2" height="6"/><rect x="241" y="278" width="2" height="3"/><rect x="246" y="280" width="2" height="2"/><rect x="251" y="281" width="2" height="2"/><rect x="256" y="281" width="2" height="3"/><rect x="261" y="281" width="2" height="2"/><rect x="266" y="281" width="2" height="2"/><rect x="271" y="281" width="2" height="3"/><rect x="275" y="281" width="2" height="3"/><rect x="280" y="281" width="2" height="3"/><rect x="285" y="281" width="2" height="2"/><rect x="290" y="281" width="2" height="2"/><rect x="295" y="281" width="2" height="2"/><rect x="300" y="281" width="2" height="4"/><rect x="305" y="281" width="2" height="6"/><rect x="310" y="281" width="2" height="7"/><rect x="315" y="281" width="2" height="7"/><rect x="320" y="281" width="2" height="7"/><rect x="325" y="281" width="2" height="6"/><rect x="330" y="281" width="2" height="4"/><rect x="335" y="281" width="2" height="2"/><rect x="339" y="281" width="2" height="2"/><rect x="344" y="279" width="2" height="2"/><rect x="349" y="278" width="2" height="3"/><rect x="354" y="276" width="2" height="5"/><rect x="359" y="276" width="2" height="5"/><rect x="364" y="278" width="2" height="3"/><rect x="369" y="279" width="2" height="2"/><rect x="374" y="280" width="2" height="2"/><rect x="379" y="281" width="2" height="2"/><rect x="384" y="281" width="2" height="2"/><rect x="389" y="281" width="2" height="3"/><rect x="394" y="281" width="2" height="3"/><rect x="399" y="281" width="2" height="3"/><rect x="403" y="281" width="2" height="2"/><rect x="408" y="281" width="2" height="2"/><rect x="413" y="281" width="2" height="2"/><rect x="418" y="281" width="2" height="2"/><rect x="423" y="281" width="2" height="2"/><rect x="428" y="281" width="2" height="2"/><rect x="433" y="281" width="2" height="2"/><rect x="438" y="281" width="2" height="2"/><rect x="443" y="281" width="2" height="3"/><rect x="448" y="281" width="2" height="4"/><rect x="453" y="281" width="2" height="3"/><rect x="458" y="281" width="2" height="3"/><rect x="462" y="281" width="2" height="3"/><rect x="467" y="281" width="2" height="3"/><rect x="472" y="281" width="2" height="2"/><rect x="477" y="281" width="2" height="2"/><rect x="482" y="281" width="2" height="2"/><rect x="487" y="281" width="2" height="2"/><rect x="492" y="280" width="2" height="2"/><rect x="497" y="279" width="2" height="2"/><rect x="502" y="278" width="2" height="3"/><rect x="507" y="278" width="2" height="3"/><rect x="512" y="277" width="2" height="4"/><rect x="517" y="277" width="2" height="4"/><rect x="521" y="277" width="2" height="4"/><rect x="526" y="277" width="2" height="4"/><rect x="531" y="277" width="2" height="4"/><rect x="536" y="277" width="2" height="4"/><rect x="541" y="276" width="2" height="5"/><rect x="546" y="275" width="2" height="6"/><rect x="551" y="275" width="2" height="6"/><rect x="556" y="276" width="2" height="5"/><rect x="561" y="276" width="2" height="5"/><rect x="566" y="276" width="2" height="5"/><rect x="571" y="276" width="2" height="5"/><rect x="576" y="277" width="2" height="4"/><rect x="581" y="277" width="2" height="4"/><rect x="585" y="278" width="2" height="3"/><rect x="590" y="278" width="2" height="3"/><rect x="595" y="279" width="2" height="2"/><rect x="600" y="280" width="2" height="2"/><rect x="605" y="280" width="2" height="2"/><rect x="610" y="280" width="2" height="2"/><rect x="615" y="281" width="2" height="2"/><rect x="620" y="281" width="2" height="2"/><rect x="625" y="280" width="2" height="2"/><rect x="630" y="280" width="2" height="2"/><rect x="635" y="280" width="2" height="2"/><rect x="640" y="280" width="2" height="2"/><rect x="645" y="280" width="2" height="2"/><rect x="649" y="280" width="2" height="2"/><rect x="654" y="281" width="2" height="2"/><rect x="659" y="280" width="2" height="2"/><rect x="664" y="277" width="2" height="4"/><rect x="669" y="276" width="2" height="5"/><rect x="674" y="275" width="2" height="6"/><rect x="679" y="274" width="2" height="7"/><rect x="684" y="274" width="2" height="7"/><rect x="689" y="277" width="2" height="4"/><rect x="693" y="279" width="2" height="2"/><rect x="698" y="280" width="2" height="2"/><rect x="703" y="281" width="2" height="2"/><rect x="708" y="281" width="2" height="2"/><rect x="713" y="281" width="2" height="2"/><rect x="718" y="281" width="2" height="3"/><rect x="723" y="281" width="2" height="4"/><rect x="728" y="281" width="2" height="4"/><rect x="732" y="281" width="2" height="5"/><rect x="737" y="281" width="2" height="6"/><rect x="742" y="281" width="2" height="7"/><rect x="747" y="281" width="2" height="6"/><rect x="752" y="281" width="2" height="6"/><rect x="757" y="281" width="2" height="6"/><rect x="762" y="281" width="2" height="6"/><rect x="767" y="281" width="2" height="6"/><rect x="772" y="281" width="2" height="6"/><rect x="777" y="281" width="2" height="6"/><rect x="782" y="281" width="2" height="6"/><rect x="787" y="281" width="2" height="5"/><rect x="791" y="281" width="2" height="5"/><rect x="796" y="281" width="2" height="4"/><rect x="801" y="281" width="2" height="3"/><rect x="806" y="281" width="2" height="3"/><rect x="811" y="281" width="2" height="3"/><rect x="816" y="281" width="2" height="4"/><rect x="821" y="281" width="2" height="4"/><rect x="826" y="281" width="2" height="4"/></g>
<polyline points="18.5,296.7 31.7,295.2 42.0,292.1 59.8,289.4 67.0,291.0 83.8,297.3 98.3,303.5 112.9,316.0 133.8,329.6 148.3,332.1 165.0,329.6 188.0,321.3 202.5,308.8 215.0,302.5 233.8,298.3 237.9,298.3 244.2,301.5 250.0,302.1 256.2,304.2 270.8,306.0 281.2,307.1 295.8,306.0 308.3,312.5 320.8,316.7 327.0,317.1 339.6,312.9 358.3,304.2 368.8,304.6 379.2,307.7 387.5,310.8 437.5,310.8 448.0,313.3 462.5,313.5 479.2,314.6 490.0,311.2 497.5,307.7 516.2,301.5 535.0,298.3 547.5,293.1 568.3,287.5 593.3,285.8 610.0,286.9 618.3,289.6 630.8,285.8 655.8,285.8 666.2,279.6 682.9,270.2 689.2,270.8 703.8,275.4 708.7,275.9 722.6,279.4 746.9,286.3 769.4,290.6 786.8,294.1 804.2,295.0 826.7,298.5" fill="none" stroke="#10106a" stroke-width="1.2" stroke-linejoin="round"/>
<g fill="#e02a2a"><circle cx="21.4" cy="300.2" r="1.6"/><circle cx="26.3" cy="299.3" r="1.6"/><circle cx="31.2" cy="298.4" r="1.6"/><circle cx="36.2" cy="297.4" r="1.6"/><circle cx="41.1" cy="296.5" r="1.6"/><circle cx="46.0" cy="295.5" r="1.6"/><circle cx="50.9" cy="294.4" r="1.6"/><circle cx="55.8" cy="293.4" r="1.6"/><circle cx="60.8" cy="292.4" r="1.6"/><circle cx="65.7" cy="291.6" r="1.6"/><circle cx="70.6" cy="292.3" r="1.6"/><circle cx="75.5" cy="293.0" r="1.6"/><circle cx="80.4" cy="293.7" r="1.6"/><circle cx="85.4" cy="294.6" r="1.6"/><circle cx="90.3" cy="295.6" r="1.6"/><circle cx="95.2" cy="296.7" r="1.6"/><circle cx="100.1" cy="297.8" r="1.6"/><circle cx="105.0" cy="299.9" r="1.6"/><circle cx="110.0" cy="303.0" r="1.6"/><circle cx="114.9" cy="306.0" r="1.6"/><circle cx="119.8" cy="309.1" r="1.6"/><circle cx="124.7" cy="311.9" r="1.6"/><circle cx="129.6" cy="314.8" r="1.6"/><circle cx="134.6" cy="317.6" r="1.6"/><circle cx="139.5" cy="320.5" r="1.6"/><circle cx="144.4" cy="322.1" r="1.6"/><circle cx="149.3" cy="323.6" r="1.6"/><circle cx="154.2" cy="325.1" r="1.6"/><circle cx="159.2" cy="326.6" r="1.6"/><circle cx="164.1" cy="327.1" r="1.6"/><circle cx="169.0" cy="327.1" r="1.6"/><circle cx="173.9" cy="327.0" r="1.6"/><circle cx="178.8" cy="326.0" r="1.6"/><circle cx="183.8" cy="325.0" r="1.6"/><circle cx="188.7" cy="324.0" r="1.6"/><circle cx="193.6" cy="322.4" r="1.6"/><circle cx="198.5" cy="319.7" r="1.6"/><circle cx="203.4" cy="317.1" r="1.6"/><circle cx="208.4" cy="314.4" r="1.6"/><circle cx="213.3" cy="311.8" r="1.6"/><circle cx="218.2" cy="309.9" r="1.6"/><circle cx="223.1" cy="308.1" r="1.6"/><circle cx="228.0" cy="306.3" r="1.6"/><circle cx="233.0" cy="304.5" r="1.6"/><circle cx="237.9" cy="303.7" r="1.6"/><circle cx="242.8" cy="303.0" r="1.6"/><circle cx="247.7" cy="302.4" r="1.6"/><circle cx="252.6" cy="301.8" r="1.6"/><circle cx="257.6" cy="302.0" r="1.6"/><circle cx="262.5" cy="302.9" r="1.6"/><circle cx="267.4" cy="303.3" r="1.6"/><circle cx="272.3" cy="303.8" r="1.6"/><circle cx="277.2" cy="304.2" r="1.6"/><circle cx="282.2" cy="304.6" r="1.6"/><circle cx="287.1" cy="304.6" r="1.6"/><circle cx="292.0" cy="304.6" r="1.6"/><circle cx="296.9" cy="304.6" r="1.6"/><circle cx="301.8" cy="305.6" r="1.6"/><circle cx="306.8" cy="306.6" r="1.6"/><circle cx="311.7" cy="307.5" r="1.6"/><circle cx="316.6" cy="309.1" r="1.6"/><circle cx="321.5" cy="310.7" r="1.6"/><circle cx="326.4" cy="312.1" r="1.6"/><circle cx="331.4" cy="312.7" r="1.6"/><circle cx="336.3" cy="312.7" r="1.6"/><circle cx="341.2" cy="312.3" r="1.6"/><circle cx="346.1" cy="311.8" r="1.6"/><circle cx="351.0" cy="310.7" r="1.6"/><circle cx="356.0" cy="309.6" r="1.6"/><circle cx="360.9" cy="308.5" r="1.6"/><circle cx="365.8" cy="307.6" r="1.6"/><circle cx="370.7" cy="307.1" r="1.6"/><circle cx="375.6" cy="306.7" r="1.6"/><circle cx="380.6" cy="307.1" r="1.6"/><circle cx="385.5" cy="307.5" r="1.6"/><circle cx="390.4" cy="307.9" r="1.6"/><circle cx="395.3" cy="308.3" r="1.6"/><circle cx="400.2" cy="308.5" r="1.6"/><circle cx="405.2" cy="308.6" r="1.6"/><circle cx="410.1" cy="308.8" r="1.6"/><circle cx="415.0" cy="309.0" r="1.6"/><circle cx="419.9" cy="309.2" r="1.6"/><circle cx="424.8" cy="309.3" r="1.6"/><circle cx="429.8" cy="309.5" r="1.6"/><circle cx="434.7" cy="309.6" r="1.6"/><circle cx="439.6" cy="309.8" r="1.6"/><circle cx="444.5" cy="309.9" r="1.6"/><circle cx="449.4" cy="310.1" r="1.6"/><circle cx="454.4" cy="310.4" r="1.6"/><circle cx="459.3" cy="310.7" r="1.6"/><circle cx="464.2" cy="311.0" r="1.6"/><circle cx="469.1" cy="311.3" r="1.6"/><circle cx="474.0" cy="312.1" r="1.6"/><circle cx="479.0" cy="312.9" r="1.6"/><circle cx="483.9" cy="312.0" r="1.6"/><circle cx="488.8" cy="311.0" r="1.6"/><circle cx="493.7" cy="310.1" r="1.6"/><circle cx="498.6" cy="309.1" r="1.6"/><circle cx="503.6" cy="308.1" r="1.6"/><circle cx="508.5" cy="307.2" r="1.6"/><circle cx="513.4" cy="306.2" r="1.6"/><circle cx="518.3" cy="305.2" r="1.6"/><circle cx="523.2" cy="304.2" r="1.6"/><circle cx="528.2" cy="303.1" r="1.6"/><circle cx="533.1" cy="301.9" r="1.6"/><circle cx="538.0" cy="300.7" r="1.6"/><circle cx="542.9" cy="299.4" r="1.6"/><circle cx="547.8" cy="298.2" r="1.6"/><circle cx="552.8" cy="296.7" r="1.6"/><circle cx="557.7" cy="295.3" r="1.6"/><circle cx="562.6" cy="293.8" r="1.6"/><circle cx="567.5" cy="292.3" r="1.6"/><circle cx="572.4" cy="291.5" r="1.6"/><circle cx="577.4" cy="290.7" r="1.6"/><circle cx="582.3" cy="290.0" r="1.6"/><circle cx="587.2" cy="289.2" r="1.6"/><circle cx="592.1" cy="288.2" r="1.6"/><circle cx="597.0" cy="287.5" r="1.6"/><circle cx="602.0" cy="287.5" r="1.6"/><circle cx="606.9" cy="287.5" r="1.6"/><circle cx="611.8" cy="287.5" r="1.6"/><circle cx="616.7" cy="287.5" r="1.6"/><circle cx="621.6" cy="287.5" r="1.6"/><circle cx="626.6" cy="287.3" r="1.6"/><circle cx="631.5" cy="287.1" r="1.6"/><circle cx="636.4" cy="286.9" r="1.6"/><circle cx="641.3" cy="286.7" r="1.6"/><circle cx="646.2" cy="286.5" r="1.6"/><circle cx="651.2" cy="286.3" r="1.6"/><circle cx="656.1" cy="285.3" r="1.6"/><circle cx="661.0" cy="284.3" r="1.6"/><circle cx="665.9" cy="283.2" r="1.6"/><circle cx="670.8" cy="281.8" r="1.6"/><circle cx="675.8" cy="280.0" r="1.6"/><circle cx="680.7" cy="278.3" r="1.6"/><circle cx="685.6" cy="276.7" r="1.6"/><circle cx="690.5" cy="275.2" r="1.6"/><circle cx="695.4" cy="274.4" r="1.6"/><circle cx="700.4" cy="274.4" r="1.6"/><circle cx="705.3" cy="274.4" r="1.6"/><circle cx="710.2" cy="274.5" r="1.6"/><circle cx="715.1" cy="275.2" r="1.6"/><circle cx="720.0" cy="275.9" r="1.6"/><circle cx="725.0" cy="276.6" r="1.6"/><circle cx="729.9" cy="277.3" r="1.6"/><circle cx="734.8" cy="278.1" r="1.6"/><circle cx="739.7" cy="278.8" r="1.6"/><circle cx="744.6" cy="279.7" r="1.6"/><circle cx="749.6" cy="280.9" r="1.6"/><circle cx="754.5" cy="282.1" r="1.6"/><circle cx="759.4" cy="283.4" r="1.6"/><circle cx="764.3" cy="284.4" r="1.6"/><circle cx="769.2" cy="285.4" r="1.6"/><circle cx="774.2" cy="286.4" r="1.6"/><circle cx="779.1" cy="287.4" r="1.6"/><circle cx="784.0" cy="288.4" r="1.6"/><circle cx="788.9" cy="289.3" r="1.6"/><circle cx="793.8" cy="290.3" r="1.6"/><circle cx="798.8" cy="291.1" r="1.6"/><circle cx="803.7" cy="291.9" r="1.6"/><circle cx="808.6" cy="292.6" r="1.6"/><circle cx="813.5" cy="293.3" r="1.6"/><circle cx="818.4" cy="293.7" r="1.6"/><circle cx="823.4" cy="294.2" r="1.6"/><circle cx="828.3" cy="294.6" r="1.6"/></g>
<rect x="19" y="268" width="31" height="12.5" fill="#3a3f47"/>
<text x="20.5" y="279" font-family="Liberation Sans" font-size="10.5" fill="#1a1a80" textLength="28.5" lengthAdjust="spacingAndGlyphs">MACD</text>
</g>
<g clip-path="url(#cp3)">
<polygon points="18.5,397 18.5,362.6 23.3,364.7 31.7,365.1 35.4,357.8 40.0,364.0 48.3,364.7 51.5,366.1 58.8,362.6 60.8,362.6 65.0,372.4 67.0,375.5 81.7,380.7 93.1,380.7 100.4,389.0 108.8,394.2 119.2,389.0 128.5,393.2 133.8,389.0 140.0,382.8 146.2,382.2 150.4,384.9 156.7,377.6 160.8,376.5 169.2,370.3 177.5,362.6 183.8,367.2 189.0,364.0 194.2,352.6 199.4,352.6 203.5,355.1 212.9,355.7 221.2,360.9 225.4,366.1 233.8,367.2 242.1,378.6 247.3,375.5 250.0,375.5 257.3,382.2 261.5,376.5 265.6,375.1 272.9,378.2 280.2,377.6 286.5,369.2 290.6,369.2 295.8,374.5 301.0,388.0 306.2,389.0 311.5,384.2 318.8,384.2 324.0,386.3 329.2,371.3 335.4,364.0 340.6,369.7 345.8,358.4 354.2,358.4 361.5,367.2 366.7,370.3 377.0,379.7 384.4,381.3 391.7,377.6 399.0,369.2 404.2,376.5 418.8,369.2 429.2,375.1 441.7,376.5 447.9,387.0 453.1,373.4 458.3,372.4 464.6,376.5 472.9,378.0 479.2,375.1 483.3,367.2 490.0,364.7 493.3,363.4 498.5,362.6 502.7,367.2 512.1,355.7 516.2,362.0 522.5,368.8 529.8,365.5 537.1,364.0 542.3,348.4 547.5,361.3 552.7,359.2 563.1,363.4 570.4,360.5 578.8,365.1 582.9,364.0 587.1,366.1 593.3,364.0 601.7,365.1 607.9,374.5 612.1,370.9 618.3,370.3 623.5,367.2 626.7,357.8 630.8,356.8 637.1,367.2 643.3,367.6 649.6,366.8 655.8,357.8 665.2,348.0 670.4,352.6 674.6,351.5 680.8,350.1 685.0,352.6 689.2,368.2 693.3,369.2 699.6,371.8 705.2,369.0 719.1,368.1 724.3,375.6 734.7,372.5 739.9,373.3 748.6,378.5 757.3,375.6 762.5,376.8 769.4,376.8 778.1,384.3 783.3,372.8 788.5,376.3 793.8,373.3 798.1,374.5 803.3,372.5 814.6,380.3 821.5,380.8 826.7,382.9 826.7,397" fill="url(#rg)"/>
<line x1="19" y1="344.6" x2="826.7" y2="344.6" stroke="#14148e" stroke-width="2"/>
<line x1="19" y1="388.5" x2="826.7" y2="388.5" stroke="#14148e" stroke-width="2"/>
<polyline points="18.5,362.6 23.3,364.7 31.7,365.1 35.4,357.8 40.0,364.0 48.3,364.7 51.5,366.1 58.8,362.6 60.8,362.6 65.0,372.4 67.0,375.5 81.7,380.7 93.1,380.7 100.4,389.0 108.8,394.2 119.2,389.0 128.5,393.2 133.8,389.0 140.0,382.8 146.2,382.2 150.4,384.9 156.7,377.6 160.8,376.5 169.2,370.3 177.5,362.6 183.8,367.2 189.0,364.0 194.2,352.6 199.4,352.6 203.5,355.1 212.9,355.7 221.2,360.9 225.4,366.1 233.8,367.2 242.1,378.6 247.3,375.5 250.0,375.5 257.3,382.2 261.5,376.5 265.6,375.1 272.9,378.2 280.2,377.6 286.5,369.2 290.6,369.2 295.8,374.5 301.0,388.0 306.2,389.0 311.5,384.2 318.8,384.2 324.0,386.3 329.2,371.3 335.4,364.0 340.6,369.7 345.8,358.4 354.2,358.4 361.5,367.2 366.7,370.3 377.0,379.7 384.4,381.3 391.7,377.6 399.0,369.2 404.2,376.5 418.8,369.2 429.2,375.1 441.7,376.5 447.9,387.0 453.1,373.4 458.3,372.4 464.6,376.5 472.9,378.0 479.2,375.1 483.3,367.2 490.0,364.7 493.3,363.4 498.5,362.6 502.7,367.2 512.1,355.7 516.2,362.0 522.5,368.8 529.8,365.5 537.1,364.0 542.3,348.4 547.5,361.3 552.7,359.2 563.1,363.4 570.4,360.5 578.8,365.1 582.9,364.0 587.1,366.1 593.3,364.0 601.7,365.1 607.9,374.5 612.1,370.9 618.3,370.3 623.5,367.2 626.7,357.8 630.8,356.8 637.1,367.2 643.3,367.6 649.6,366.8 655.8,357.8 665.2,348.0 670.4,352.6 674.6,351.5 680.8,350.1 685.0,352.6 689.2,368.2 693.3,369.2 699.6,371.8 705.2,369.0 719.1,368.1 724.3,375.6 734.7,372.5 739.9,373.3 748.6,378.5 757.3,375.6 762.5,376.8 769.4,376.8 778.1,384.3 783.3,372.8 788.5,376.3 793.8,373.3 798.1,374.5 803.3,372.5 814.6,380.3 821.5,380.8 826.7,382.9" fill="none" stroke="#f0903c" stroke-width="1.1" stroke-linejoin="round"/>
<polyline points="93.1,380.7 100.4,389.0 108.8,394.2 119.2,389.0 128.5,393.2 133.8,389.0" fill="none" stroke="#22c030" stroke-width="1.1"/>
<polyline points="295.8,374.5 301.0,388.0 306.2,389.0" fill="none" stroke="#22c030" stroke-width="1.1"/>
<rect x="19" y="342" width="17" height="12.5" fill="#3a3f47"/>
<text x="20.5" y="353" font-family="Liberation Sans" font-size="10.5" fill="#eca060" textLength="15" lengthAdjust="spacingAndGlyphs">RSI</text>
</g>
<rect x="19.5" y="374.5" width="62.0" height="18.5" rx="2" fill="#607188" stroke="#b2c4d6" stroke-width="1.3"/>
<line x1="19.5" y1="374" x2="19.5" y2="400.5" stroke="#d8eee4" stroke-width="1.8"/>
<text x="26.5" y="388" font-family="Liberation Sans" font-size="11.5" fill="#f4f6f8" textLength="49" lengthAdjust="spacingAndGlyphs">Май 2021</text>
<rect x="587" y="374.5" width="69.5" height="18.5" rx="2" fill="#607188" stroke="#b2c4d6" stroke-width="1.3"/>
<line x1="587" y1="374" x2="587" y2="400.5" stroke="#d8eee4" stroke-width="1.8"/>
<text x="593.5" y="388" font-family="Liberation Sans" font-size="11.5" fill="#f4f6f8" textLength="57" lengthAdjust="spacingAndGlyphs">Июнь 2021</text>
<rect x="49.5" y="38" width="244" height="13" fill="#3a3f47"/>
<rect x="18.5" y="37.5" width="30.5" height="21.5" fill="#ecebea"/><rect x="18.5" y="37.5" width="30.5" height="4.5" fill="#cfcfcf"/>
<defs><linearGradient id="lr" x1="0" y1="0" x2="0" y2="1"><stop offset="0" stop-color="#f25a5a"/><stop offset="1" stop-color="#cc1e2c"/></linearGradient><linearGradient id="lb" x1="0" y1="0" x2="0" y2="1"><stop offset="0" stop-color="#44b4ea"/><stop offset="1" stop-color="#1a7cc2"/></linearGradient></defs>
<rect x="22.5" y="45.5" width="9.5" height="9" rx="1.8" fill="url(#lr)" stroke="#9a1420" stroke-width="0.8"/>
<rect x="35.5" y="45.5" width="9.5" height="9" rx="1.8" fill="url(#lb)" stroke="#10568e" stroke-width="0.8"/>
<text x="49.5" y="49.5" font-family="Liberation Sans" font-size="11.5" fill="#2020c8" textLength="104" lengthAdjust="spacingAndGlyphs">ential_Moving_Average</text>
<text x="158" y="49.5" font-family="Liberation Sans" font-size="11.5" fill="#c82424" textLength="134.5" lengthAdjust="spacingAndGlyphs">Exponential_Moving_Average</text>
<text x="901.5" y="68.8" font-family="Liberation Sans" font-size="11" fill="#f2f2ee" textLength="32.5" lengthAdjust="spacingAndGlyphs">0.9150</text>
<text x="901.5" y="110.7" font-family="Liberation Sans" font-size="11" fill="#f2f2ee" textLength="32.5" lengthAdjust="spacingAndGlyphs">0.9100</text>
<text x="901.5" y="152.5" font-family="Liberation Sans" font-size="11" fill="#f2f2ee" textLength="32.5" lengthAdjust="spacingAndGlyphs">0.9050</text>
<text x="901.5" y="194.3" font-family="Liberation Sans" font-size="11" fill="#f2f2ee" textLength="32.5" lengthAdjust="spacingAndGlyphs">0.9000</text>
<text x="901.5" y="236.1" font-family="Liberation Sans" font-size="11" fill="#f2f2ee" textLength="32.5" lengthAdjust="spacingAndGlyphs">0.8950</text>
<text x="901.5" y="287.3" font-family="Liberation Sans" font-size="11" fill="#f2f2ee" textLength="35" lengthAdjust="spacingAndGlyphs">+0.000</text>
<text x="901.5" y="371.7" font-family="Liberation Sans" font-size="11" fill="#f2f2ee" textLength="12" lengthAdjust="spacingAndGlyphs">50</text>
<line x1="25.5" y1="397.5" x2="25.5" y2="401" stroke="#a6b4c6" stroke-width="1"/>
<text x="21.8" y="420" font-family="Liberation Sans" font-size="11" font-weight="bold" fill="#f2f2ee" textLength="5.5" lengthAdjust="spacingAndGlyphs">5</text>
<line x1="55.5" y1="397.5" x2="55.5" y2="401" stroke="#a6b4c6" stroke-width="1"/>
<text x="51.3" y="420" font-family="Liberation Sans" font-size="11" font-weight="bold" fill="#f2f2ee" textLength="5.5" lengthAdjust="spacingAndGlyphs">6</text>
<line x1="84.5" y1="397.5" x2="84.5" y2="401" stroke="#a6b4c6" stroke-width="1"/>
<text x="80.8" y="420" font-family="Liberation Sans" font-size="11" font-weight="bold" fill="#f2f2ee" textLength="5.5" lengthAdjust="spacingAndGlyphs">7</text>
<line x1="114.5" y1="397.5" x2="114.5" y2="401" stroke="#a6b4c6" stroke-width="1"/>
<text x="107.6" y="420" font-family="Liberation Sans" font-size="11" font-weight="bold" fill="#f2f2ee" textLength="11.0" lengthAdjust="spacingAndGlyphs">10</text>
<line x1="143.5" y1="397.5" x2="143.5" y2="401" stroke="#a6b4c6" stroke-width="1"/>
<text x="137.1" y="420" font-family="Liberation Sans" font-size="11" font-weight="bold" fill="#f2f2ee" textLength="11.0" lengthAdjust="spacingAndGlyphs">11</text>
<line x1="173.5" y1="397.5" x2="173.5" y2="401" stroke="#a6b4c6" stroke-width="1"/>
<text x="166.6" y="420" font-family="Liberation Sans" font-size="11" font-weight="bold" fill="#f2f2ee" textLength="11.0" lengthAdjust="spacingAndGlyphs">12</text>
<line x1="202.5" y1="397.5" x2="202.5" y2="401" stroke="#a6b4c6" stroke-width="1"/>
<text x="196.1" y="420" font-family="Liberation Sans" font-size="11" font-weight="bold" fill="#f2f2ee" textLength="11.0" lengthAdjust="spacingAndGlyphs">13</text>
<line x1="232.5" y1="397.5" x2="232.5" y2="401" stroke="#a6b4c6" stroke-width="1"/>
<text x="225.6" y="420" font-family="Liberation Sans" font-size="11" font-weight="bold" fill="#f2f2ee" textLength="11.0" lengthAdjust="spacingAndGlyphs">14</text>
<line x1="261.5" y1="397.5" x2="261.5" y2="401" stroke="#a6b4c6" stroke-width="1"/>
<text x="255.2" y="420" font-family="Liberation Sans" font-size="11" font-weight="bold" fill="#f2f2ee" textLength="11.0" lengthAdjust="spacingAndGlyphs">17</text>
<line x1="291.5" y1="397.5" x2="291.5" y2="401" stroke="#a6b4c6" stroke-width="1"/>
<text x="284.7" y="420" font-family="Liberation Sans" font-size="11" font-weight="bold" fill="#f2f2ee" textLength="11.0" lengthAdjust="spacingAndGlyphs">18</text>
<line x1="320.5" y1="397.5" x2="320.5" y2="401" stroke="#a6b4c6" stroke-width="1"/>
<text x="314.2" y="420" font-family="Liberation Sans" font-size="11" font-weight="bold" fill="#f2f2ee" textLength="11.0" lengthAdjust="spacingAndGlyphs">19</text>
<line x1="350.5" y1="397.5" x2="350.5" y2="401" stroke="#a6b4c6" stroke-width="1"/>
<text x="343.7" y="420" font-family="Liberation Sans" font-size="11" font-weight="bold" fill="#f2f2ee" textLength="11.0" lengthAdjust="spacingAndGlyphs">20</text>
<line x1="380.5" y1="397.5" x2="380.5" y2="401" stroke="#a6b4c6" stroke-width="1"/>
<text x="373.2" y="420" font-family="Liberation Sans" font-size="11" font-weight="bold" fill="#f2f2ee" textLength="11.0" lengthAdjust="spacingAndGlyphs">21</text>
<line x1="409.5" y1="397.5" x2="409.5" y2="401" stroke="#a6b4c6" stroke-width="1"/>
<text x="402.8" y="420" font-family="Liberation Sans" font-size="11" font-weight="bold" fill="#f2f2ee" textLength="11.0" lengthAdjust="spacingAndGlyphs">24</text>
<line x1="439.5" y1="397.5" x2="439.5" y2="401" stroke="#a6b4c6" stroke-width="1"/>
<text x="432.3" y="420" font-family="Liberation Sans" font-size="11" font-weight="bold" fill="#f2f2ee" textLength="11.0" lengthAdjust="spacingAndGlyphs">25</text>
<line x1="468.5" y1="397.5" x2="468.5" y2="401" stroke="#a6b4c6" stroke-width="1"/>
<text x="461.8" y="420" font-family="Liberation Sans" font-size="11" font-weight="bold" fill="#f2f2ee" textLength="11.0" lengthAdjust="spacingAndGlyphs">26</text>
<line x1="498.5" y1="397.5" x2="498.5" y2="401" stroke="#a6b4c6" stroke-width="1"/>
<text x="491.3" y="420" font-family="Liberation Sans" font-size="11" font-weight="bold" fill="#f2f2ee" textLength="11.0" lengthAdjust="spacingAndGlyphs">27</text>
<line x1="527.5" y1="397.5" x2="527.5" y2="401" stroke="#a6b4c6" stroke-width="1"/>
<text x="520.8" y="420" font-family="Liberation Sans" font-size="11" font-weight="bold" fill="#f2f2ee" textLength="11.0" lengthAdjust="spacingAndGlyphs">28</text>
<line x1="557.5" y1="397.5" x2="557.5" y2="401" stroke="#a6b4c6" stroke-width="1"/>
<text x="550.4" y="420" font-family="Liberation Sans" font-size="11" font-weight="bold" fill="#f2f2ee" textLength="11.0" lengthAdjust="spacingAndGlyphs">31</text>
<line x1="586.5" y1="397.5" x2="586.5" y2="401" stroke="#a6b4c6" stroke-width="1"/>
<text x="582.6" y="420" font-family="Liberation Sans" font-size="11" font-weight="bold" fill="#f2f2ee" textLength="5.5" lengthAdjust="spacingAndGlyphs">1</text>
<line x1="616.5" y1="397.5" x2="616.5" y2="401" stroke="#a6b4c6" stroke-width="1"/>
<text x="612.1" y="420" font-family="Liberation Sans" font-size="11" font-weight="bold" fill="#f2f2ee" textLength="5.5" lengthAdjust="spacingAndGlyphs">2</text>
<line x1="645.5" y1="397.5" x2="645.5" y2="401" stroke="#a6b4c6" stroke-width="1"/>
<text x="641.7" y="420" font-family="Liberation Sans" font-size="11" font-weight="bold" fill="#f2f2ee" textLength="5.5" lengthAdjust="spacingAndGlyphs">3</text>
<line x1="675.5" y1="397.5" x2="675.5" y2="401" stroke="#a6b4c6" stroke-width="1"/>
<text x="671.2" y="420" font-family="Liberation Sans" font-size="11" font-weight="bold" fill="#f2f2ee" textLength="5.5" lengthAdjust="spacingAndGlyphs">4</text>
<line x1="704.5" y1="397.5" x2="704.5" y2="401" stroke="#a6b4c6" stroke-width="1"/>
<text x="700.7" y="420" font-family="Liberation Sans" font-size="11" font-weight="bold" fill="#f2f2ee" textLength="5.5" lengthAdjust="spacingAndGlyphs">7</text>
<line x1="734.5" y1="397.5" x2="734.5" y2="401" stroke="#a6b4c6" stroke-width="1"/>
<text x="730.2" y="420" font-family="Liberation Sans" font-size="11" font-weight="bold" fill="#f2f2ee" textLength="5.5" lengthAdjust="spacingAndGlyphs">8</text>
<line x1="763.5" y1="397.5" x2="763.5" y2="401" stroke="#a6b4c6" stroke-width="1"/>
<text x="759.8" y="420" font-family="Liberation Sans" font-size="11" font-weight="bold" fill="#f2f2ee" textLength="5.5" lengthAdjust="spacingAndGlyphs">9</text>
<line x1="793.5" y1="397.5" x2="793.5" y2="401" stroke="#a6b4c6" stroke-width="1"/>
<text x="786.5" y="420" font-family="Liberation Sans" font-size="11" font-weight="bold" fill="#f2f2ee" textLength="11.0" lengthAdjust="spacingAndGlyphs">10</text>
<line x1="822.5" y1="397.5" x2="822.5" y2="401" stroke="#a6b4c6" stroke-width="1"/>
<text x="816.0" y="420" font-family="Liberation Sans" font-size="11" font-weight="bold" fill="#f2f2ee" textLength="11.0" lengthAdjust="spacingAndGlyphs">11</text>
<line x1="852.5" y1="397.5" x2="852.5" y2="401" stroke="#a6b4c6" stroke-width="1"/>
<text x="845.6" y="420" font-family="Liberation Sans" font-size="11" font-weight="bold" fill="#f2f2ee" textLength="11.0" lengthAdjust="spacingAndGlyphs">12</text>
<line x1="881.5" y1="397.5" x2="881.5" y2="401" stroke="#a6b4c6" stroke-width="1"/>
<text x="875.1" y="420" font-family="Liberation Sans" font-size="11" font-weight="bold" fill="#f2f2ee" textLength="11.0" lengthAdjust="spacingAndGlyphs">13</text>
<rect x="894.5" y="231" width="47.5" height="20.5" fill="#ffffff"/>
<text x="902.5" y="245.5" font-family="Liberation Sans" font-size="11" fill="#505860" textLength="32.5" lengthAdjust="spacingAndGlyphs">0.8936</text>
</svg>
</body></html>
